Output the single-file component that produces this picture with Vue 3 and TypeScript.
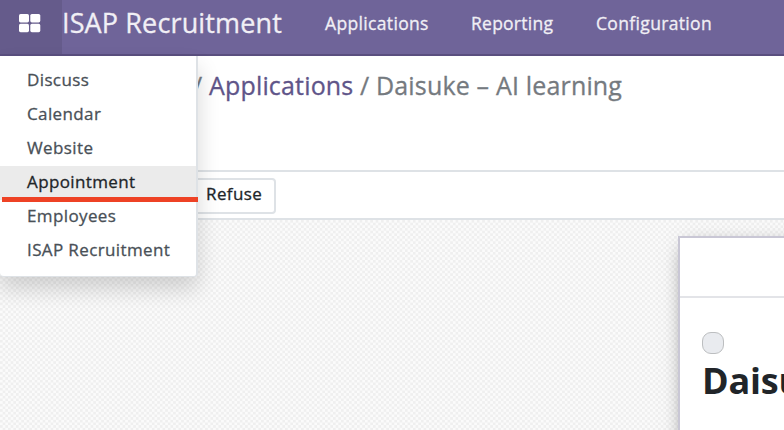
<script setup lang="ts">
import { ref } from 'vue'

const apps = ['Discuss', 'Calendar', 'Website', 'Appointment', 'Employees', 'ISAP Recruitment']
const active = ref('Appointment')
</script>

<template>
  <div class="page">
    <header class="navbar">
      <button class="launcher" aria-label="Apps">
        <svg width="22" height="19" viewBox="0 0 22 19" fill="#fff">
          <rect x="0" y="0" width="10" height="8.4" rx="1.6" />
          <rect x="11.3" y="0" width="10" height="8.4" rx="1.6" />
          <rect x="0" y="9.8" width="10" height="8.4" rx="1.6" />
          <rect x="11.3" y="9.8" width="10" height="8.4" rx="1.6" />
        </svg>
      </button>
      <span class="brand">ISAP Recruitment</span>
      <nav class="sections">
        <a class="applications">Applications</a>
        <a class="reporting">Reporting</a>
        <a class="configuration">Configuration</a>
      </nav>
    </header>
    <section class="control">
      <div class="crumbs">
        <span class="slash">/</span>
        <a class="link">Applications</a>
        <span class="slash">/</span>
        <span class="current">Daisuke – AI learning</span>
      </div>
    </section>
    <section class="status"><button class="refuse">Refuse</button></section>
    <main class="canvas">
      <article class="sheet">
        <div class="sheet-top"></div>
        <div class="sheet-body">
          <span class="state"></span>
          <h1>Daisuke</h1>
        </div>
      </article>
    </main>
    <ul class="menu">
      <li v-for="app in apps" :key="app" :class="{ active: app === active }" @mouseenter="active = app">
        {{ app }}
      </li>
      <li class="marker" aria-hidden="true"></li>
    </ul>
  </div>
</template>

<style>
body { margin: 0; overflow: hidden; }
</style>

<style scoped>
* { box-sizing: border-box; }
.page {
  position: relative;
  width: 784px;
  height: 430px;
  overflow: hidden;
  display: flex;
  flex-direction: column;
  background: #fff;
  font-family: "Open Sans", "Noto Sans", sans-serif;
  -webkit-text-stroke: 0.3px currentColor;
  white-space: nowrap;
}
.navbar {
  flex: none;
  height: 56px;
  display: flex;
  background: #6f6499;
  border-bottom: 2px solid #5a4f7f;
  color: #f1eff5;
}
.launcher {
  width: 62px;
  border: 0;
  padding: 14px 0 0 19px;
  background: #655b8b;
  display: flex;
  align-items: flex-start;
}
.brand { width: 262px; font-size: 27px; line-height: 45px; letter-spacing: 0.13px; }
.sections { display: flex; padding-left: 1px; font-size: 17.5px; line-height: 47px; letter-spacing: 0.34px; }
.applications { width: 146px; }
.reporting { width: 125px; letter-spacing: 0.25px; }
.control { flex: none; height: 116px; border-bottom: 2px solid #dee2e6; padding: 11px 0 0 193px; }
.crumbs { display: flex; font-size: 25px; line-height: 36px; letter-spacing: 0.17px; color: #757a7f; }
.slash { width: 16px; }
.link { width: 151px; color: #5f5589; }
.status { flex: none; height: 48px; border-bottom: 2px solid #dee2e6; padding: 6px 0 0 190px; }
.refuse {
  display: block;
  width: 86px;
  height: 36px;
  padding: 0 0 5px 14px;
  border: 2px solid #dee2e6;
  border-radius: 4px;
  background: #fff;
  color: #212529;
  font: 17px/27px "Open Sans", "Noto Sans", sans-serif;
  letter-spacing: 0.4px;
  text-align: left;
}
.canvas {
  flex: 1;
  padding: 16px 0 0 678px;
  background: repeating-conic-gradient(#efefef 0 25%, #fbfbfb 0 50%) 0 0 / 5.333px 5.333px;
}
.sheet {
  width: 300px;
  height: 300px;
  border: 2px solid #c9c7d5;
  background: #fff;
  box-shadow: 0 5px 20px -8px rgba(0, 0, 0, 0.6);
}
.sheet-top { height: 60px; border-bottom: 2px solid #e3e4e8; }
.sheet-body { padding: 34px 0 0 22px; display: flex; flex-direction: column; }
.state { width: 22px; height: 22px; border-radius: 9px; border: 1px solid #bcbec0; background: #e9ebef; }
h1 {
  margin: 2px 0 0;
  color: #212529;
  font-size: 36px;
  line-height: 50px;
  font-weight: 700;
  letter-spacing: -0.2px;
  -webkit-text-stroke: 0;
}
.menu {
  position: absolute;
  left: 0;
  top: 56px;
  width: 198px;
  height: 221px;
  margin: 0;
  padding: 8px 0 0;
  list-style: none;
  background: #fff;
  border: solid #dee2e6;
  border-width: 0 2px 1px 0;
  border-radius: 0 0 4px 4px;
  box-shadow: 0 12px 22px rgba(0, 0, 0, 0.16);
  color: #495057;
  font-size: 17px;
  letter-spacing: 0.38px;
}
.menu li { height: 34px; padding-left: 27px; line-height: 31px; }
.menu li.active { background: #ebebeb; color: #212529; }
.menu .marker {
  position: absolute;
  left: 2px;
  top: 141px;
  width: 196px;
  height: 5px;
  padding: 0;
  background: #ee4225;
}
</style>
